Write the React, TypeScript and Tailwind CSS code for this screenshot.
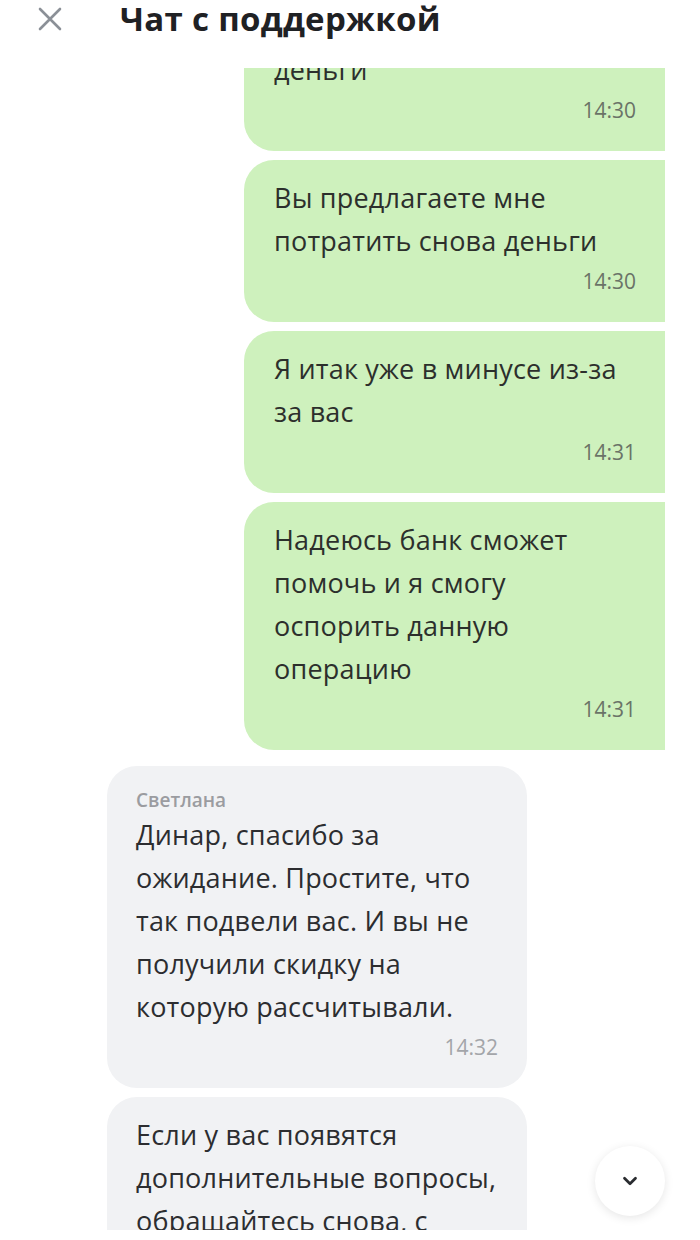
import React from "react";

function Green({ lines, time, className = "" }: { lines: string[]; time: string; className?: string }) {
  return (
    <div className={`ml-[244px] w-[421px] shrink-0 rounded-l-[30px] bg-[#cef1bd] pl-[30px] pr-[29px] pt-[16px] pb-[29px] ${className}`}>
      {lines.map((l, i) => (
        <div key={i} className="whitespace-nowrap text-[27px] leading-[43px] tracking-[0.2px] text-[#2c2f2c]">{l}</div>
      ))}
      <div className="mt-[7px] text-right text-[21px] leading-[24px] text-[#6a7367]">{time}</div>
    </div>
  );
}

export default function App() {
  return (
    <div className="relative h-[1240px] w-[700px] overflow-hidden bg-white" style={{ fontFamily: "'Open Sans', Roboto, sans-serif" }}>
      <div className="flex h-[68px] shrink-0 items-start">
        <div className="ml-[38px] mt-[7px] h-[24px] w-[24px]">
          <svg viewBox="0 0 24 24" width="24" height="24" fill="none" stroke="#8b9097" strokeWidth="2.6" strokeLinecap="round">
            <path d="M2 2L22 22M22 2L2 22" />
          </svg>
        </div>
        <div className="ml-[58px] mt-[0px] whitespace-nowrap text-[33px] font-bold leading-[38px] tracking-[0.3px] text-[#1f2124]">Чат с поддержкой</div>
      </div>
      <div className="flex h-[1162px] w-[665px] flex-col gap-[9px] overflow-hidden">
        <Green className="mt-[-36px]" lines={["деньги"]} time="14:30" />
        <Green lines={["Вы предлагаете мне", "потратить снова деньги"]} time="14:30" />
        <Green lines={["Я итак уже в минусе из-за", "за вас"]} time="14:31" />
        <Green lines={["Надеюсь банк сможет", "помочь и я смогу", "оспорить данную", "операцию"]} time="14:31" />
        <div className="ml-[107px] mt-[7px] w-[420px] shrink-0 rounded-[30px] bg-[#f1f2f4] pl-[29px] pr-[29px] pt-[23px] pb-[29px]">
          <div className="text-[19px] font-semibold leading-[22px] text-[#9b9ca0]">Светлана</div>
          <div className="mt-[2px]">
            {["Динар, спасибо за", "ожидание. Простите, что", "так подвели вас. И вы не", "получили скидку на", "которую рассчитывали."].map((l, i) => (
              <div key={i} className="whitespace-nowrap text-[27px] leading-[43px] tracking-[0.2px] text-[#2c2d30]">{l}</div>
            ))}
          </div>
          <div className="mt-[7px] text-right text-[21px] leading-[24px] text-[#a3a5a9]">14:32</div>
        </div>
        <div className="ml-[107px] w-[420px] shrink-0 rounded-[30px] bg-[#f1f2f4] pl-[29px] pr-[29px] pt-[16px] pb-[29px]">
          {["Если у вас появятся", "дополнительные вопросы,", "обращайтесь снова, с", "радостью поможем."].map((l, i) => (
            <div key={i} className="whitespace-nowrap text-[27px] leading-[43px] tracking-[0.2px] text-[#2c2d30]">{l}</div>
          ))}
        </div>
      </div>
      <div className="absolute left-[595px] top-[1146px] flex h-[70px] w-[70px] items-center justify-center rounded-full bg-white shadow-[0_2px_10px_rgba(0,0,0,0.1)]">
        <svg viewBox="0 0 24 24" width="22" height="22" fill="none" stroke="#2a2c30" strokeWidth="3" strokeLinecap="round" strokeLinejoin="round">
          <path d="M6 9l6 6 6-6" />
        </svg>
      </div>
    </div>
  );
}
